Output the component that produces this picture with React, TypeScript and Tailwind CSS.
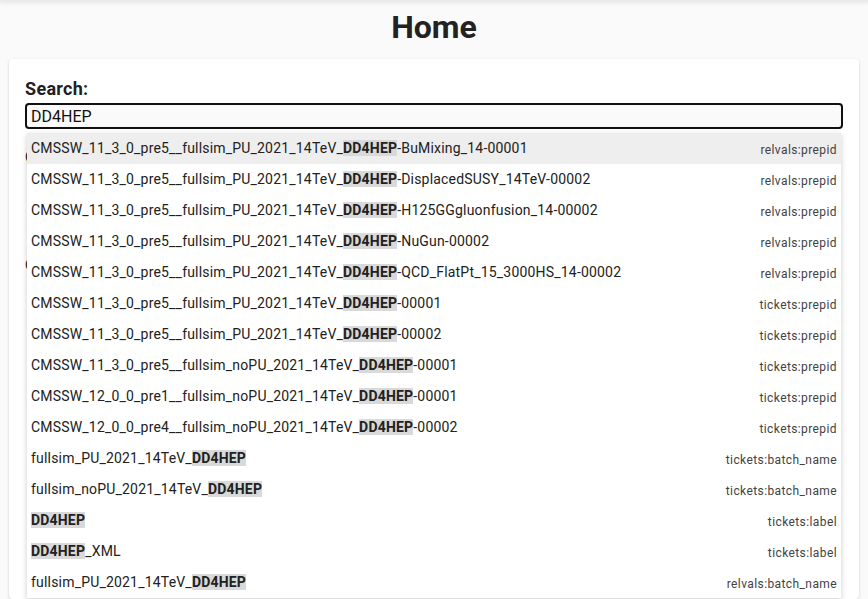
import React from "react"

type Suggestion = {
  before: string
  match: string
  after: string
  source: string
}

const rows: Suggestion[] = [
  { before: "CMSSW_11_3_0_pre5__fullsim_PU_2021_14TeV_", match: "DD4HEP", after: "-BuMixing_14-00001", source: "relvals:prepid" },
  { before: "CMSSW_11_3_0_pre5__fullsim_PU_2021_14TeV_", match: "DD4HEP", after: "-DisplacedSUSY_14TeV-00002", source: "relvals:prepid" },
  { before: "CMSSW_11_3_0_pre5__fullsim_PU_2021_14TeV_", match: "DD4HEP", after: "-H125GGgluonfusion_14-00002", source: "relvals:prepid" },
  { before: "CMSSW_11_3_0_pre5__fullsim_PU_2021_14TeV_", match: "DD4HEP", after: "-NuGun-00002", source: "relvals:prepid" },
  { before: "CMSSW_11_3_0_pre5__fullsim_PU_2021_14TeV_", match: "DD4HEP", after: "-QCD_FlatPt_15_3000HS_14-00002", source: "relvals:prepid" },
  { before: "CMSSW_11_3_0_pre5__fullsim_PU_2021_14TeV_", match: "DD4HEP", after: "-00001", source: "tickets:prepid" },
  { before: "CMSSW_11_3_0_pre5__fullsim_PU_2021_14TeV_", match: "DD4HEP", after: "-00002", source: "tickets:prepid" },
  { before: "CMSSW_11_3_0_pre5__fullsim_noPU_2021_14TeV_", match: "DD4HEP", after: "-00001", source: "tickets:prepid" },
  { before: "CMSSW_12_0_0_pre1__fullsim_noPU_2021_14TeV_", match: "DD4HEP", after: "-00001", source: "tickets:prepid" },
  { before: "CMSSW_12_0_0_pre4__fullsim_noPU_2021_14TeV_", match: "DD4HEP", after: "-00002", source: "tickets:prepid" },
  { before: "fullsim_PU_2021_14TeV_", match: "DD4HEP", after: "", source: "tickets:batch_name" },
  { before: "fullsim_noPU_2021_14TeV_", match: "DD4HEP", after: "", source: "tickets:batch_name" },
  { before: "", match: "DD4HEP", after: "", source: "tickets:label" },
  { before: "", match: "DD4HEP", after: "_XML", source: "tickets:label" },
  { before: "fullsim_PU_2021_14TeV_", match: "DD4HEP", after: "", source: "relvals:batch_name" },
]

// 추천 항목 한 줄
function SuggestionRow({ item, active }: { item: Suggestion; active?: boolean }) {
  return (
    <div
      className={`flex h-[31px] items-center justify-between px-1 ${active ? "bg-[#eeeeee]" : "bg-white"}`}
    >
      <span className="whitespace-nowrap text-[14px] leading-[17px] tracking-[0.19px] text-[#212121]">
        {item.before}
        <span className="bg-[#d9d9d9] font-bold">{item.match}</span>
        {item.after}
      </span>
      <span className="whitespace-nowrap pt-[3px] text-[12px] tracking-[0.4px] text-[#424242]">
        {item.source}
      </span>
    </div>
  )
}

export default function App() {
  return (
    <div className="flex h-screen flex-col overflow-hidden bg-[#fafafa] font-['Roboto',sans-serif] text-[#212121]">
      <div className="h-0 shadow-[0_0_5px_2px_rgba(0,0,0,0.12)]" />
      <h1 className="pt-[8px] pb-[12px] text-center text-[32px] font-bold leading-[39px] text-[#222222]">
        Home
      </h1>

      <div className="mx-[9px] flex-1 rounded bg-white px-4 pt-[16px] shadow-[0_1px_3px_rgba(0,0,0,0.18)]">
        <div className="text-[18px] font-bold leading-[27px] tracking-[0.3px]">Search:</div>
        <div className="relative mt-px">
          <input
            readOnly
            value="DD4HEP"
            spellCheck={false}
            className="block h-[26px] w-full rounded-[4px] border-2 border-[#111111] bg-[#fafafa] px-1 text-[16px] text-[#111111] outline-none"
          />

          {/* 검색 결과 아래 가려진 내용 */}
          <div className="pt-[18px] text-[14px] leading-[20px] text-[#212121]">
            <p>Or browse the list of campaigns and tickets</p>
            <p className="mt-[88px]">Or open the recent requests page</p>
          </div>

          <div className="absolute left-[2px] right-[2px] top-[30px] z-10 bg-white shadow-[0_2px_6px_rgba(0,0,0,0.2)]">
            {rows.map((item, i) => (
              <SuggestionRow key={i} item={item} active={i === 0} />
            ))}
          </div>
        </div>
      </div>
    </div>
  )
}
